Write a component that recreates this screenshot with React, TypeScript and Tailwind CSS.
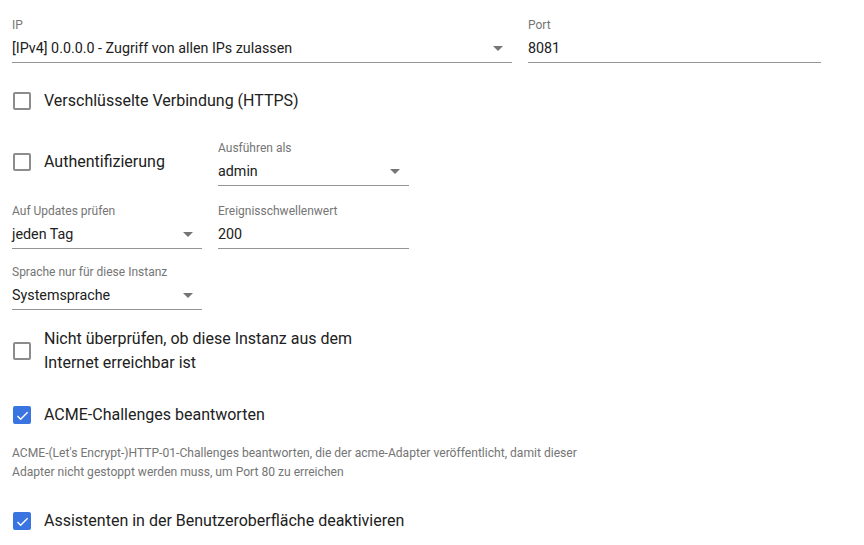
import React from 'react';

function Arrow() {
  return (
    <svg width="10" height="5" viewBox="0 0 10 5" className="shrink-0">
      <path d="M0 0h10L5 5z" fill="#757575" />
    </svg>
  );
}

function Field({ label, value, select, className }: { label: string; value: string; select?: boolean; className: string }) {
  return (
    <div className={className}>
      <div className="h-4 text-xs leading-4 text-[#757575]">{label}</div>
      <div className="mt-[5px] box-content flex h-5 items-center justify-between border-b border-[#949494] pb-1 text-[14.3px] leading-5 text-[#212121]">
        <span>{value}</span>
        {select && <span className="mr-[9px]"><Arrow /></span>}
      </div>
    </div>
  );
}

function Box({ checked }: { checked?: boolean }) {
  return checked ? (
    <span className="flex h-[18px] w-[18px] shrink-0 items-center justify-center rounded-[2px] bg-[#3a74e0]">
      <svg width="15" height="15" viewBox="0 0 24 24">
        <path d="M9 16.2 4.8 12l-1.6 1.6L9 19.4 21 7.4l-1.6-1.6L9 16.2z" fill="#fff" />
      </svg>
    </span>
  ) : (
    <span className="h-[18px] w-[18px] shrink-0 rounded-[2px] border-2 border-[#8c8c8c]" />
  );
}

function Check({ label, checked, className = '' }: { label: React.ReactNode; checked?: boolean; className?: string }) {
  return (
    <div className={`flex items-center gap-[13px] pl-px ${className}`}>
      <Box checked={checked} />
      <span className="text-base leading-6 text-[#212121]">{label}</span>
    </div>
  );
}

export default function App() {
  return (
    <div className="h-[545px] w-[864px] overflow-hidden bg-white px-3 pt-[17px] font-['Roboto',sans-serif]">
      <div className="flex gap-4">
        <Field className="w-[500px]" label="IP" value="[IPv4] 0.0.0.0 - Zugriff von allen IPs zulassen" select />
        <Field className="w-[293px]" label="Port" value="8081" />
      </div>

      <Check className="mt-[26px]" label="Verschlüsselte Verbindung (HTTPS)" />

      <div className="mt-[27px] flex items-start gap-4">
        <Check className="mt-[10px] w-[190px]" label="Authentifizierung" />
        <Field className="w-[191px]" label="Ausführen als" value="admin" select />
      </div>

      <div className="mt-[17px] flex gap-4">
        <Field className="w-[190px]" label="Auf Updates prüfen" value="jeden Tag" select />
        <Field className="w-[191px]" label="Ereignisschwellenwert" value="200" />
      </div>

      <Field className="mt-[15px] w-[190px]" label="Sprache nur für diese Instanz" value="Systemsprache" select />

      <Check
        className="mt-[17px]"
        label={<>Nicht überprüfen, ob diese Instanz aus dem<br />Internet erreichbar ist</>}
      />

      <Check className="mt-[28px]" label="ACME-Challenges beantworten" checked />

      <p className="mt-[17px] text-[12.1px] leading-[19px] text-[#757575]">
        ACME-(Let's Encrypt-)HTTP-01-Challenges beantworten, die der acme-Adapter veröffentlicht, damit dieser
        <br />
        Adapter nicht gestoppt werden muss, um Port 80 zu erreichen
      </p>

      <Check className="mt-[27px]" label="Assistenten in der Benutzeroberfläche deaktivieren" checked />
    </div>
  );
}
